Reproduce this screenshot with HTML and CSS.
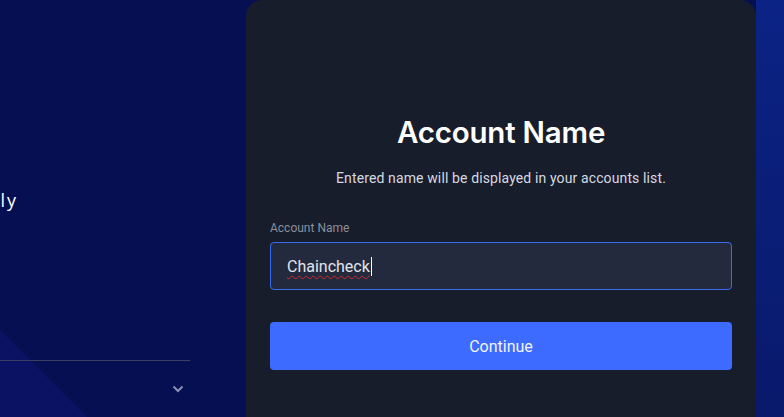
FILE: index.html
```html
<!DOCTYPE html>
<html lang="en">
<head>
<meta charset="utf-8">
<title>Account Name</title>
<link rel="stylesheet" href="styles.css">
</head>
<body>
<div class="page">
  <aside class="side">
    <div class="intro">Manage your assets securely</div>
    <div class="divider"></div>
    <div class="faq-row">
      <svg class="chev" width="12" height="8" viewBox="0 0 12 8"><path d="M1.5 1.5 L6 6 L10.5 1.5" fill="none" stroke="#8a90b4" stroke-width="2"/></svg>
    </div>
  </aside>
  <main class="card">
    <h1 class="title">Account Name</h1>
    <p class="subtitle">Entered name will be displayed in your accounts list.</p>
    <label class="label">Account Name</label>
    <div class="field" role="textbox"><span class="typed">Chaincheck</span><span class="caret"></span></div>
    <button class="btn">Continue</button>
  </main>
  <div class="strip"></div>
</div>
</body>
</html>
```

FILE: styles.css
```css
* { box-sizing: border-box; }
html, body { margin: 0; padding: 0; height: 100%; }
body {
  background: #050f52;
  font-family: Roboto, "Liberation Sans", sans-serif;
  overflow: hidden;
}
.page {
  display: flex;
  height: 417px;
  width: 784px;
}
.side {
  width: 246px;
  flex: none;
  display: flex;
  flex-direction: column;
  overflow: hidden;
  background: linear-gradient(45deg, #0b1263 61px, #050f52 62px);
}
.intro {
  flex: none;
  width: 300px;
  margin-left: -282px;
  margin-top: 188px;
  text-align: right;
  white-space: nowrap;
  color: #ffffff;
  font-family: "Open Sans", "Noto Sans", sans-serif;
  font-size: 18px;
  line-height: 24px;
  letter-spacing: 2px;
}
.divider {
  width: 190px;
  margin-top: 148px;
  border-top: 1px solid #3b3f63;
}
.faq-row {
  width: 190px;
  height: 55px;
  display: flex;
  align-items: center;
  justify-content: flex-end;
  padding-right: 6px;
}
.chev { display: block; }
.card {
  width: 510px;
  flex: none;
  height: 417px;
  background: #181d2b;
  border-radius: 16px 16px 0 0;
  padding: 0 24px;
  display: flex;
  flex-direction: column;
}
.title {
  margin: 114px 0 0;
  font-family: Inter, Roboto, sans-serif;
  font-weight: 600;
  font-size: 29.5px;
  line-height: 36px;
  color: #ffffff;
  text-align: center;
  letter-spacing: -0.2px;
}
.subtitle {
  margin: 18px 0 0;
  font-size: 14px;
  line-height: 20px;
  color: #d6d9e2;
  text-align: center;
  letter-spacing: 0.12px;
}
.label {
  margin-top: 32px;
  font-size: 12px;
  line-height: 16px;
  color: #8a8f9e;
}
.field {
  margin-top: 6px;
  height: 48px;
  background: #242a3d;
  border: 1px solid #3b6af0;
  border-radius: 4px;
  padding: 0 16px;
  display: flex;
  align-items: center;
  font-size: 16px;
  color: #e2e5ec;
}
.typed {
  text-decoration: underline wavy #d02a2a;
  text-decoration-thickness: 1px;
  text-underline-offset: 3px;
}
.caret {
  width: 1px;
  height: 19px;
  background: #ffffff;
  margin-left: 1px;
}
.btn {
  margin-top: 32px;
  height: 48px;
  border: none;
  border-radius: 4px;
  background: #3d6bff;
  color: #f2f4ff;
  font-family: Roboto, sans-serif;
  font-size: 16px;
}
.strip {
  flex: 1;
  background: linear-gradient(180deg, #0b2385 0%, #09196b 100%);
}
```
